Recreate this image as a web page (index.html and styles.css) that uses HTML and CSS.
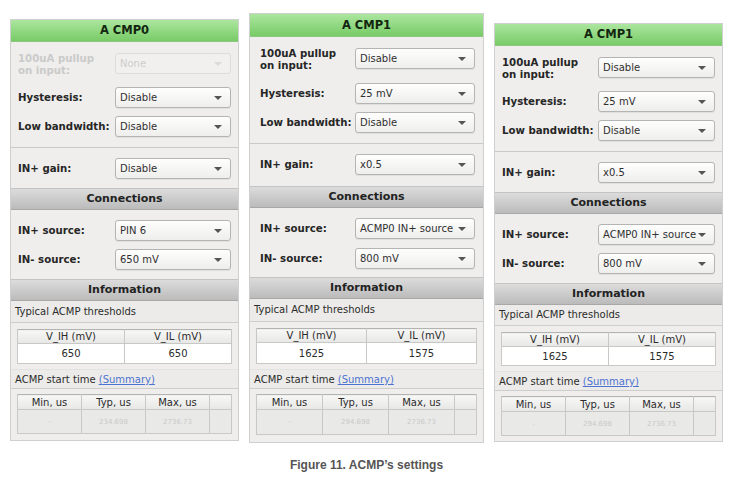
FILE: index.html
```html
<!DOCTYPE html>
<html lang="en">
<head>
  <meta charset="UTF-8">
  <title>ACMP settings</title>
  <link rel="stylesheet" href="styles.css">
</head>
<body>
  <div class="figure">
    <!-- ACMP0 -->
    <div class="panel panel-a">
      <div class="panel-title">A CMP0</div>
      <div class="group">
        <div class="field field-tall is-disabled">
          <span class="field-label">100uA pullup<br>on input:</span>
          <div class="select"><span>None</span></div>
        </div>
        <div class="field">
          <span class="field-label">Hysteresis:</span>
          <div class="select"><span>Disable</span></div>
        </div>
        <div class="field">
          <span class="field-label">Low bandwidth:</span>
          <div class="select"><span>Disable</span></div>
        </div>
      </div>
      <div class="group group-gain">
        <div class="field">
          <span class="field-label">IN+ gain:</span>
          <div class="select"><span>Disable</span></div>
        </div>
      </div>
      <div class="section-title">Connections</div>
      <div class="group group-conn">
        <div class="field">
          <span class="field-label">IN+ source:</span>
          <div class="select"><span>PIN 6</span></div>
        </div>
        <div class="field">
          <span class="field-label">IN- source:</span>
          <div class="select"><span>650 mV</span></div>
        </div>
      </div>
      <div class="section-title">Information</div>
      <div class="info">
        <div class="info-row">Typical ACMP thresholds</div>
        <table class="grid grid-thresholds">
          <tr><th>V_IH (mV)</th><th>V_IL (mV)</th></tr>
          <tr><td>650</td><td>650</td></tr>
        </table>
        <div class="info-row info-row-start">ACMP start time <a href="#">(Summary)</a></div>
        <table class="grid grid-times">
          <tr><th>Min, us</th><th>Typ, us</th><th>Max, us</th><th></th></tr>
          <tr><td>-</td><td>234.698</td><td>2736.73</td><td></td></tr>
        </table>
      </div>
    </div>

    <!-- ACMP1 -->
    <div class="panel panel-b">
      <div class="panel-title">A CMP1</div>
      <div class="group">
        <div class="field field-tall">
          <span class="field-label">100uA pullup<br>on input:</span>
          <div class="select"><span>Disable</span></div>
        </div>
        <div class="field">
          <span class="field-label">Hysteresis:</span>
          <div class="select"><span>25 mV</span></div>
        </div>
        <div class="field">
          <span class="field-label">Low bandwidth:</span>
          <div class="select"><span>Disable</span></div>
        </div>
      </div>
      <div class="group group-gain">
        <div class="field">
          <span class="field-label">IN+ gain:</span>
          <div class="select"><span>x0.5</span></div>
        </div>
      </div>
      <div class="section-title">Connections</div>
      <div class="group group-conn">
        <div class="field">
          <span class="field-label">IN+ source:</span>
          <div class="select"><span>ACMP0 IN+ source</span></div>
        </div>
        <div class="field">
          <span class="field-label">IN- source:</span>
          <div class="select"><span>800 mV</span></div>
        </div>
      </div>
      <div class="section-title">Information</div>
      <div class="info">
        <div class="info-row">Typical ACMP thresholds</div>
        <table class="grid grid-thresholds">
          <tr><th>V_IH (mV)</th><th>V_IL (mV)</th></tr>
          <tr><td>1625</td><td>1575</td></tr>
        </table>
        <div class="info-row info-row-start">ACMP start time <a href="#">(Summary)</a></div>
        <table class="grid grid-times">
          <tr><th>Min, us</th><th>Typ, us</th><th>Max, us</th><th></th></tr>
          <tr><td>-</td><td>294.698</td><td>2736.73</td><td></td></tr>
        </table>
      </div>
    </div>

    <!-- ACMP1 (second capture) -->
    <div class="panel panel-c">
      <div class="panel-title">A CMP1</div>
      <div class="group">
        <div class="field field-tall">
          <span class="field-label">100uA pullup<br>on input:</span>
          <div class="select"><span>Disable</span></div>
        </div>
        <div class="field">
          <span class="field-label">Hysteresis:</span>
          <div class="select"><span>25 mV</span></div>
        </div>
        <div class="field">
          <span class="field-label">Low bandwidth:</span>
          <div class="select"><span>Disable</span></div>
        </div>
      </div>
      <div class="group group-gain">
        <div class="field">
          <span class="field-label">IN+ gain:</span>
          <div class="select"><span>x0.5</span></div>
        </div>
      </div>
      <div class="section-title">Connections</div>
      <div class="group group-conn">
        <div class="field">
          <span class="field-label">IN+ source:</span>
          <div class="select"><span>ACMP0 IN+ source</span></div>
        </div>
        <div class="field">
          <span class="field-label">IN- source:</span>
          <div class="select"><span>800 mV</span></div>
        </div>
      </div>
      <div class="section-title">Information</div>
      <div class="info">
        <div class="info-row">Typical ACMP thresholds</div>
        <table class="grid grid-thresholds">
          <tr><th>V_IH (mV)</th><th>V_IL (mV)</th></tr>
          <tr><td>1625</td><td>1575</td></tr>
        </table>
        <div class="info-row info-row-start">ACMP start time <a href="#">(Summary)</a></div>
        <table class="grid grid-times">
          <tr><th>Min, us</th><th>Typ, us</th><th>Max, us</th><th></th></tr>
          <tr><td>-</td><td>294.698</td><td>2736.73</td><td></td></tr>
        </table>
      </div>
    </div>
  </div>

  <p class="caption">Figure 11. ACMP’s settings</p>
</body>
</html>
```

FILE: styles.css
```css
body {
  margin: 0;
  background: #fff;
  font-family: 'DejaVu Sans', sans-serif;
  color: #2b2b2b;
}

.figure {
  display: flex;
  align-items: flex-start;
  gap: 10px;
  padding: 13px 0 0 10px;
}

/* each panel is a screenshot of the settings dialog */
.panel {
  width: 229px;
  box-sizing: border-box;
  border: 1px solid #cfcfcf;
  background: #efeeec;
  padding-bottom: 6px;
}

.panel-a {
  margin-top: 6px;
}

.panel-b {
  width: 235px;
}

.panel-c {
  margin-top: 10px;
}

.panel-title {
  height: 21px;
  line-height: 21px;
  text-align: center;
  font-size: 11.5px;
  font-weight: bold;
  color: #13260f;
  background: linear-gradient(#ace69f, #78cb67);
  border-bottom: 1px solid #8fc683;
}

.group {
  display: flex;
  flex-direction: column;
  gap: 8px;
  padding: 11px 7px 10px 7px;
  border-bottom: 1px solid #c9c9c7;
}

.group-gain {
  padding-top: 10px;
  padding-bottom: 9px;
  border-bottom: none;
}

.group-conn {
  padding-top: 10px;
  padding-bottom: 9px;
  border-bottom: none;
}

.field {
  display: grid;
  grid-template-columns: 97px 1fr;
  align-items: center;
  height: 21px;
}

.field-tall {
  height: 26px;
  align-items: start;
}

.field-label {
  font-size: 10.2px;
  font-weight: bold;
  line-height: 12px;
  color: #262626;
  white-space: nowrap;
}

.select {
  position: relative;
  height: 21px;
  box-sizing: border-box;
  border: 1px solid #b4b4b2;
  border-radius: 3px;
  background: linear-gradient(#fefefe, #eeeeec);
  box-shadow: 0 1px 0 rgba(0, 0, 0, 0.06);
  font-size: 10px;
  line-height: 19px;
  padding-left: 4px;
  color: #303030;
  white-space: nowrap;
  overflow: hidden;
}

/* dropdown arrow */
.select::after {
  content: '';
  position: absolute;
  right: 8px;
  top: 8px;
  border-left: 4px solid transparent;
  border-right: 4px solid transparent;
  border-top: 4px solid #555;
}

.is-disabled .field-label {
  color: #cacaca;
}

.is-disabled .select {
  border-color: #dcdcda;
  background: #f1f0ee;
  color: #cdcdcd;
  box-shadow: none;
}

.is-disabled .select::after {
  border-top-color: #dadada;
}

.section-title {
  height: 22px;
  box-sizing: border-box;
  line-height: 20px;
  text-align: center;
  font-size: 11px;
  font-weight: bold;
  color: #222;
  background: linear-gradient(#dcdcdc, #bbbbbb);
  border-top: 1px solid #c4c4c4;
  border-bottom: 1px solid #a8a8a8;
}

.info-row {
  height: 22px;
  box-sizing: border-box;
  line-height: 21px;
  padding-left: 4px;
  font-size: 10px;
  color: #2b2b2b;
  background: #ecebe9;
  border-bottom: 1px solid #cdcdcb;
}

.info-row-start {
  height: 20px;
  line-height: 19px;
  margin-top: 5px;
  border-top: 1px solid #e2e2e0;
}

.info-row a {
  color: #4d73d1;
  text-decoration: underline;
}

.grid {
  width: calc(100% - 12px);
  margin: 6px 6px 0;
  border-collapse: collapse;
  border: 1px solid #b3b3b1;
  table-layout: fixed;
  font-size: 10px;
}

.grid th {
  height: 13px;
  padding: 0;
  font-weight: normal;
  color: #2b2b2b;
  line-height: 13px;
  background: linear-gradient(#f7f7f6, #e7e7e5);
  border: 1px solid #c8c8c6;
  border-top: none;
}

.grid td {
  padding: 0;
  text-align: center;
  border: 1px solid #c8c8c6;
}

.grid-thresholds td {
  height: 19px;
  background: #fff;
  color: #2b2b2b;
}

.grid-times {
  margin-top: 5px;
}

.grid-times th {
  height: 14px;
}

.grid-times th:last-child,
.grid-times td:last-child {
  width: 21px;
}

.grid-times td {
  height: 23px;
  background: #e9e9e7;
  color: #c9c9c7;
  font-size: 7px;
}

/* middle capture is scaled a little larger */
.panel-b {
  padding-bottom: 7px;
}

.panel-b .panel-title {
  height: 22px;
  line-height: 22px;
}

.panel-b .group {
  padding-left: 10px;
  padding-right: 8px;
}

.panel-b .group-gain {
  padding-bottom: 11px;
}

.panel-b .group-conn {
  gap: 9px;
  padding-bottom: 8px;
}

.panel-b .field {
  grid-template-columns: 95px 1fr;
}

.panel-b .field-tall {
  height: 27px;
}

.panel-b .info-row {
  height: 23px;
  line-height: 22px;
}

.panel-b .info-row-start {
  height: 20px;
  line-height: 19px;
}

.panel-b .grid-thresholds td {
  height: 20px;
}

.panel-b .grid-times td {
  height: 24px;
}

/* right capture is a touch shorter at the bottom */
.panel-c {
  padding-bottom: 5px;
}

.panel-c .field {
  grid-template-columns: 96px 1fr;
}

.panel-c .info-row {
  height: 21px;
  line-height: 20px;
}

.panel-c .info-row-start {
  height: 20px;
  line-height: 19px;
}

.panel-c .grid-thresholds td {
  height: 18px;
}

.caption {
  margin: 15px 0 0;
  text-align: center;
  font-family: 'Liberation Sans', Arial, sans-serif;
  font-size: 12px;
  font-weight: bold;
  color: #555;
}
```
